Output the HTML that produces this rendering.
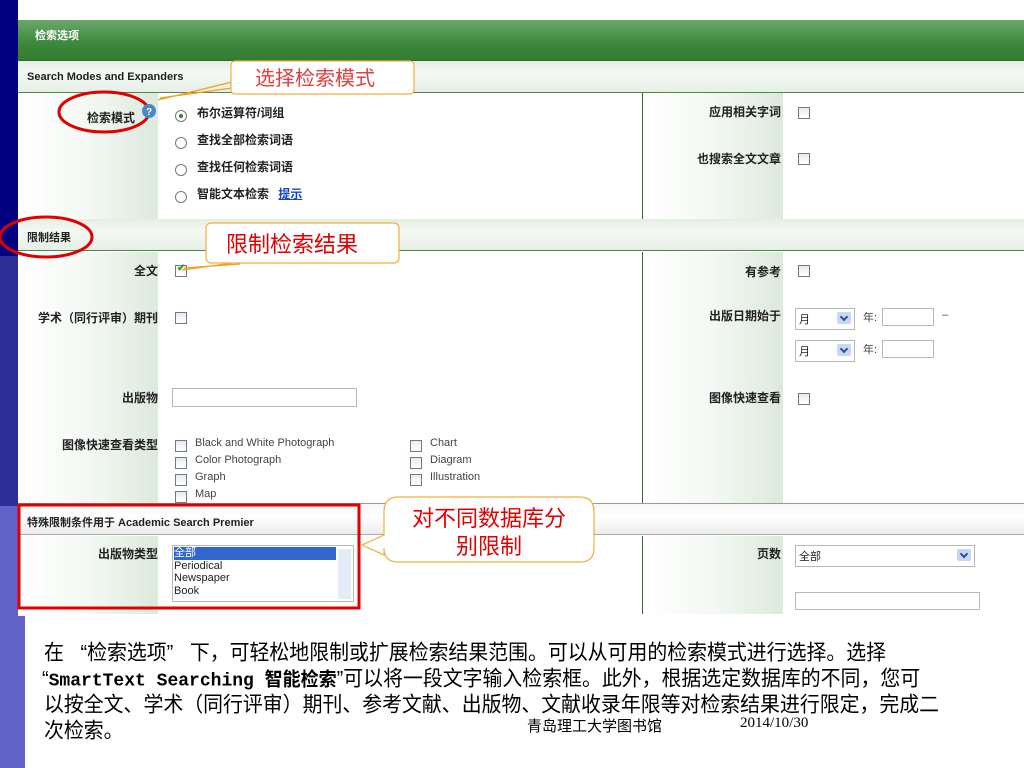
<!DOCTYPE html>
<html><head><meta charset="utf-8"><style>
*{margin:0;padding:0;box-sizing:border-box}
body{width:1024px;height:768px;position:relative;overflow:hidden;background:#fff;font-family:"Liberation Sans","Noto Sans CJK SC",sans-serif;font-size:12px;color:#222}
.a{position:absolute}
.lbl{position:absolute;font-weight:bold;font-size:12px;text-align:right;white-space:nowrap}
.cb{position:absolute;width:12px;height:12px;border:1px solid #6f7a86;background:linear-gradient(#e8eaee,#fff)}
.rd{position:absolute;width:12px;height:12px;border:1px solid #777;border-radius:50%;background:#fff}
.opt{position:absolute;font-size:12px;font-weight:bold;white-space:nowrap}
.sm{position:absolute;font-size:11px;color:#444;white-space:nowrap}
.col{position:absolute;background:linear-gradient(90deg,#fff 0%,#f4f8f4 50%,#dde9dd 100%)}
.sec{position:absolute;left:18px;width:1006px;height:32px;background:linear-gradient(#e4eee4,#f4f8f4 40%,#e6efe6);border-bottom:1px solid #4f874f;font-weight:bold;font-size:11px;padding:10px 0 0 9px}
.inp{position:absolute;border:1px solid #b8b8b8;background:#fff}
.sel{position:absolute;border:1px solid #b8b8b8;background:#fff;font-size:11px;padding:2px 3px}
.sel i{position:absolute;right:3px;top:3px;width:14px;height:12px;background:#c7d6f2;border-radius:2px}
.sel i:after{content:"";position:absolute;left:4px;top:2px;width:4px;height:4px;border-right:2px solid #2a4f9a;border-bottom:2px solid #2a4f9a;transform:rotate(45deg)}
.txt{position:absolute;left:44px;font-size:19.9px;white-space:pre;color:#000;font-family:"Liberation Sans","Noto Sans CJK SC",sans-serif;transform:scaleY(1.05)}
</style></head><body>
<div class="a" style="left:0;top:0;width:18px;height:256px;background:#000080"></div>
<div class="a" style="left:0;top:256px;width:18px;height:250px;background:#2e2e96"></div>
<div class="a" style="left:0;top:506px;width:25px;height:262px;background:#6262c8"></div>
<div class="a" style="left:18px;top:506px;width:7px;height:110px;background:#fff"></div>

<div class="a" style="left:18px;top:20px;width:1006px;height:41px;background:linear-gradient(#6aa86a,#3c873c 60%,#357d35);border-bottom:1px solid #2b6a2b"></div>
<div class="a" style="left:35px;top:27px;color:#fff;font-weight:bold;font-size:11px">检索选项</div>

<div class="sec" style="top:61px">Search Modes and Expanders</div>
<div class="col" style="left:18px;top:93px;width:140px;height:126px"></div>
<div class="col" style="left:643px;top:93px;width:140px;height:126px"></div>
<div class="a" style="left:642px;top:93px;width:1px;height:126px;background:#2d6d2d"></div>
<div class="lbl" style="left:58px;top:109px;width:77px">检索模式</div>

<div class="rd" style="left:175px;top:110px"><div class="a" style="left:3px;top:3px;width:4px;height:4px;border-radius:50%;background:#3a7a3a"></div></div>
<div class="rd" style="left:175px;top:137px"></div>
<div class="rd" style="left:175px;top:164px"></div>
<div class="rd" style="left:175px;top:191px"></div>
<div class="opt" style="left:197px;top:104px">布尔运算符/词组</div>
<div class="opt" style="left:197px;top:131px">查找全部检索词语</div>
<div class="opt" style="left:197px;top:158px">查找任何检索词语</div>
<div class="opt" style="left:197px;top:185px">智能文本检索 <span style="color:#1144cc;text-decoration:underline;margin-left:6px">提示</span></div>
<div class="lbl" style="left:680px;top:103px;width:101px">应用相关字词</div>
<div class="lbl" style="left:680px;top:150px;width:101px">也搜索全文文章</div>
<div class="cb" style="left:798px;top:107px"></div>
<div class="cb" style="left:798px;top:153px"></div>

<div class="sec" style="top:219px">限制结果</div>
<div class="col" style="left:18px;top:252px;width:140px;height:251px"></div>
<div class="col" style="left:643px;top:252px;width:140px;height:251px"></div>
<div class="a" style="left:642px;top:252px;width:1px;height:251px;background:#2d6d2d"></div>
<div class="lbl" style="left:60px;top:262px;width:98px">全文</div>
<div class="lbl" style="left:20px;top:309px;width:138px">学术（同行评审）期刊</div>
<div class="lbl" style="left:60px;top:389px;width:98px">出版物</div>
<div class="lbl" style="left:20px;top:436px;width:138px">图像快速查看类型</div>
<div class="cb" style="left:175px;top:265px"><span style="position:absolute;left:1px;top:-3px;color:#3a9a2a;font-size:10px;font-weight:bold">✔</span></div>
<div class="cb" style="left:175px;top:312px"></div>
<div class="inp" style="left:172px;top:388px;width:185px;height:19px"></div>
<div class="cb" style="left:175px;top:440px"></div><div class="sm" style="left:195px;top:437px">Black and White Photograph</div>
<div class="cb" style="left:175px;top:457px"></div><div class="sm" style="left:195px;top:454px">Color Photograph</div>
<div class="cb" style="left:175px;top:474px"></div><div class="sm" style="left:195px;top:471px">Graph</div>
<div class="cb" style="left:175px;top:491px"></div><div class="sm" style="left:195px;top:488px">Map</div>
<div class="cb" style="left:410px;top:440px"></div><div class="sm" style="left:430px;top:437px">Chart</div>
<div class="cb" style="left:410px;top:457px"></div><div class="sm" style="left:430px;top:454px">Diagram</div>
<div class="cb" style="left:410px;top:474px"></div><div class="sm" style="left:430px;top:471px">Illustration</div>
<div class="lbl" style="left:680px;top:263px;width:101px">有参考</div>
<div class="lbl" style="left:680px;top:307px;width:101px">出版日期始于</div>
<div class="lbl" style="left:680px;top:389px;width:101px">图像快速查看</div>
<div class="cb" style="left:798px;top:265px"></div>
<div class="cb" style="left:798px;top:393px"></div>
<div class="sel" style="left:795px;top:308px;width:60px;height:22px">月<i></i></div>
<div class="sel" style="left:795px;top:340px;width:60px;height:22px">月<i></i></div>
<div class="sm" style="left:863px;top:309px">年:</div>
<div class="sm" style="left:863px;top:341px">年:</div>
<div class="inp" style="left:882px;top:308px;width:52px;height:18px"></div>
<div class="inp" style="left:882px;top:340px;width:52px;height:18px"></div>
<div class="sm" style="left:942px;top:309px">–</div>

<div class="sec" style="top:503px;background:linear-gradient(#f6f6f6,#fff 40%,#ececec);border-top:1px solid #999;border-bottom:1px solid #aaa">特殊限制条件用于 Academic Search Premier</div>
<div class="col" style="left:18px;top:536px;width:140px;height:78px"></div>
<div class="col" style="left:643px;top:536px;width:140px;height:78px"></div>
<div class="a" style="left:642px;top:536px;width:1px;height:78px;background:#2d6d2d"></div>
<div class="lbl" style="left:60px;top:545px;width:98px">出版物类型</div>
<div class="inp" style="left:172px;top:545px;width:182px;height:57px;font-size:11px;line-height:12.5px;padding:1px">
<div style="background:#3366cc;color:#fff;width:162px">全部</div><div>Periodical</div><div>Newspaper</div><div>Book</div>
<div class="a" style="right:2px;top:3px;width:13px;height:50px;background:#e4ecf8"></div></div>
<div class="lbl" style="left:680px;top:545px;width:101px">页数</div>
<div class="sel" style="left:795px;top:545px;width:180px;height:22px">全部<i></i></div>
<div class="inp" style="left:795px;top:592px;width:185px;height:18px"></div>

<svg class="a" style="left:0;top:0" width="1024" height="768">
<ellipse cx="104" cy="112" rx="45" ry="20" fill="none" stroke="#e00000" stroke-width="3"/>
<ellipse cx="46" cy="237" rx="46" ry="20" fill="none" stroke="#e00000" stroke-width="3"/>
<path d="M158 100 L232 82 M160 98 L232 88" stroke="#f0a020" stroke-width="1.2"/>
<rect x="231" y="61" width="183" height="33" rx="4" fill="#fff" stroke="#f0b040" stroke-width="1.2"/>
<path d="M182 270 L240 262 M184 268 L240 264" stroke="#f0a020" stroke-width="1.2"/>
<rect x="206" y="223" width="193" height="40" rx="5" fill="#fff" stroke="#f0b040" stroke-width="1.2"/>
<rect x="19" y="505" width="340" height="103" fill="none" stroke="#e00000" stroke-width="3"/>
<path d="M384 512 Q384 497 398 497 L580 497 Q594 497 594 512 L594 548 Q594 562 580 562 L398 562 Q384 562 384 548 L384 555 L362 545 L384 535 Z" fill="#fff" stroke="#f0b040" stroke-width="1.2"/>
<circle cx="149" cy="111" r="7" fill="#4a86d0"/>
<text x="149" y="115" text-anchor="middle" font-family="Liberation Sans,sans-serif" font-weight="bold" font-size="10" fill="#fff">?</text>
<text x="255" y="85" font-family="Noto Sans CJK SC,sans-serif" font-size="20" fill="#e04040">选择检索模式</text>
<text x="226" y="252" font-family="Noto Sans CJK SC,sans-serif" font-size="22" fill="#e00000">限制检索结果</text>
<text x="489" y="526" text-anchor="middle" font-family="Noto Sans CJK SC,sans-serif" font-size="22" fill="#e00000">对不同数据库分</text>
<text x="489" y="554" text-anchor="middle" font-family="Noto Sans CJK SC,sans-serif" font-size="22" fill="#e00000">别限制</text>
</svg>

<div class="txt" style="top:636px">在   “检索选项”   下，可轻松地限制或扩展检索结果范围。可以从可用的检索模式进行选择。选择</div>
<div class="txt" style="top:662px;left:42px">“<b style="font-family:'Liberation Mono','Noto Sans CJK SC',monospace;font-size:18px">SmartText Searching 智能检索</b>”可以将一段文字输入检索框。此外，根据选定数据库的不同，您可</div>
<div class="txt" style="top:688px">以按全文、学术（同行评审）期刊、参考文献、出版物、文献收录年限等对检索结果进行限定，完成二</div>
<div class="txt" style="top:714px">次检索。</div>
<div class="a" style="left:527px;top:715px;font-size:15px;color:#000">青岛理工大学图书馆</div>
<div class="a" style="left:740px;top:715px;font-size:15px;color:#000;font-family:'Liberation Serif',serif">2014/10/30</div>
</body></html>
